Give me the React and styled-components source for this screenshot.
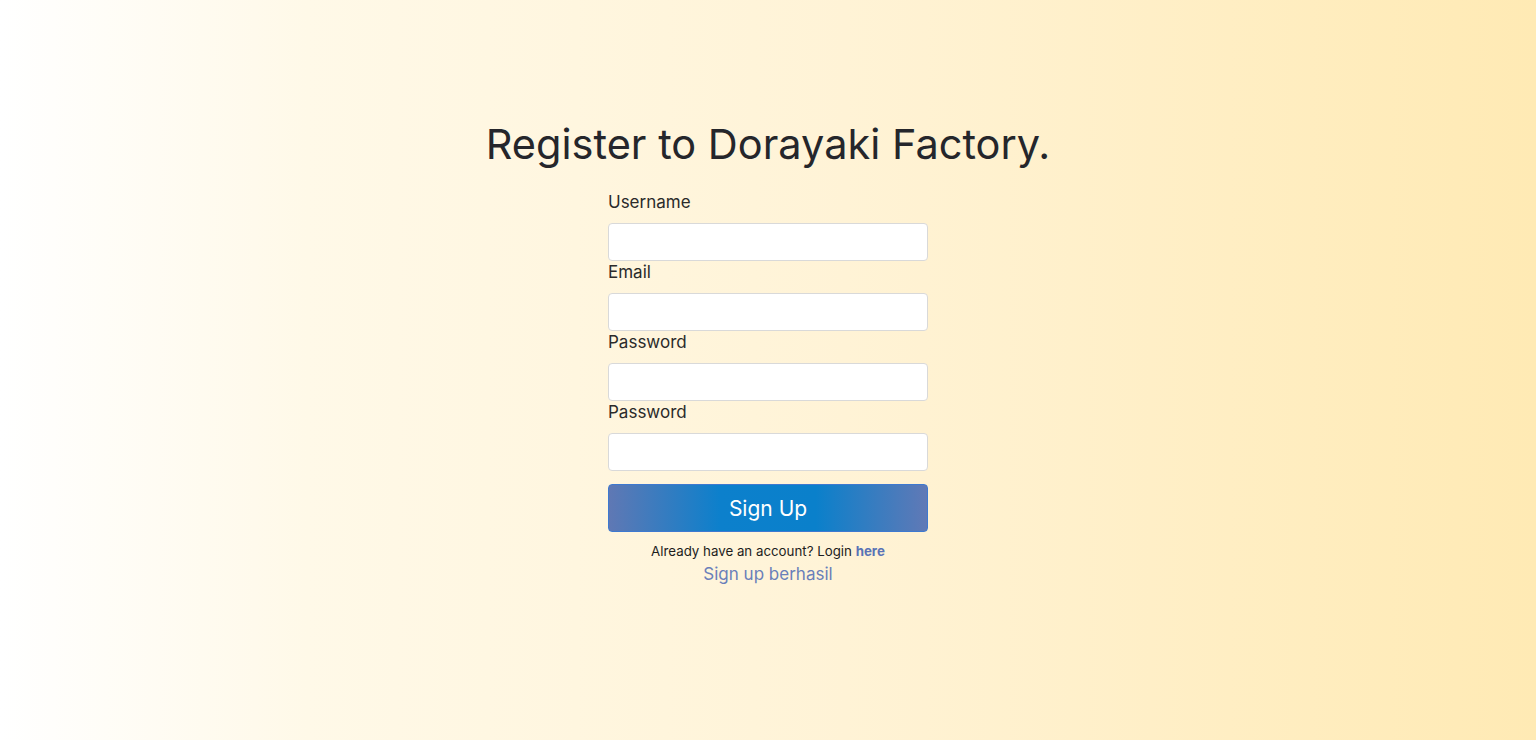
import React from 'react'
import styled, {createGlobalStyle} from 'styled-components'

const GlobalStyle = createGlobalStyle`
    html, body {
        margin: 0;
        padding: 0;
    }
    body {
        font-family: Inter, "Noto Sans", sans-serif;
        color: #222;
    }
`

const Page = styled.div`
    min-height: 740px;
    display: flex;
    flex-direction: column;
    align-items: center;
    background: linear-gradient(to right, #ffffff 0%, #fff9e8 20%, #fff3d6 55%, #ffeab4 100%);
`
const Title = styled.h1`
    margin: 119px 0 22px;
    font-size: 41.5px;
    font-weight: 400;
    color: #25262b;
`
const Form = styled.form`
    width: 320px;
    display: flex;
    flex-direction: column;
`
const Label = styled.label`
    font-size: 17px;
    line-height: 23px;
    color: #2a2a2a;
    margin-bottom: 9px;
`
const Input = styled.input`
    box-sizing: border-box;
    width: 100%;
    height: 38px;
    padding: 6px 12px;
    border: 1px solid #d9d9d9;
    border-radius: 4px;
    background: #fff;
    font-size: 16px;
`
const Field = styled.div`
    display: flex;
    flex-direction: column;
`
const SubmitButton = styled.button`
    margin-top: 13px;
    height: 48px;
    border: 1px solid #3e79d0;
    border-radius: 4px;
    background: linear-gradient(to right, #5f78b4 0%, #0c80cc 35%, #0a80cb 65%, #6079b6 100%);
    color: #fff;
    font-family: inherit;
    font-size: 21px;
    cursor: pointer;
`
const Hint = styled.p`
    margin: 11px 0 0;
    text-align: center;
    font-size: 13.3px;
    color: #1d1d1d;
`
const HintLink = styled.a`
    color: #5a73b6;
    font-weight: 700;
    text-decoration: none;
`
const Status = styled.p`
    margin: 5px 0 0;
    text-align: center;
    font-size: 17px;
    color: #6a7fba;
`

const fields = [
    {name: 'username', label: 'Username', type: 'text'},
    {name: 'email', label: 'Email', type: 'email'},
    {name: 'password', label: 'Password', type: 'password'},
    {name: 'password2', label: 'Password', type: 'password'},
]

export default function App(){
    return (
        <Page>
            <GlobalStyle />
            <Title>Register to Dorayaki Factory.</Title>
            <Form onSubmit={e => e.preventDefault()}>
                {fields.map(f => (
                    <Field key={f.name}>
                        <Label htmlFor={f.name}>{f.label}</Label>
                        <Input id={f.name} type={f.type} />
                    </Field>
                ))}
                <SubmitButton type="submit">Sign Up</SubmitButton>
                <Hint>Already have an account? Login <HintLink href="#">here</HintLink></Hint>
                <Status>Sign up berhasil</Status>
            </Form>
        </Page>
    )
}
